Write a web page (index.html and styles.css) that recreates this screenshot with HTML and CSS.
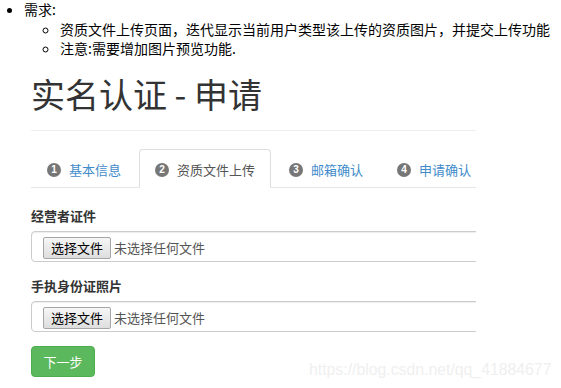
FILE: index.html
```html
<!DOCTYPE html>
<html lang="zh-CN">
<head>
<meta charset="utf-8">
<title>实名认证 - 申请</title>
<link rel="stylesheet" href="styles.css">
</head>
<body>
<ul class="req">
  <li>需求:
    <ul class="req-sub">
      <li>资质文件上传页面，迭代显示当前用户类型该上传的资质图片，并提交上传功能</li>
      <li>注意:需要增加图片预览功能.</li>
    </ul>
  </li>
</ul>
<div class="page">
  <div class="page-header">
    <h1>实名认证 - 申请</h1>
  </div>
  <ul class="tabs">
    <li><a class="tab"><span class="num">1</span>基本信息</a></li>
    <li><a class="tab active"><span class="num">2</span>资质文件上传</a></li>
    <li><a class="tab"><span class="num">3</span>邮箱确认</a></li>
    <li><a class="tab"><span class="num">4</span>申请确认</a></li>
  </ul>
  <form class="form">
    <div class="group">
      <label class="label">经营者证件</label>
      <div class="file-control"><span class="file-btn">选择文件</span><span class="file-name">未选择任何文件</span></div>
    </div>
    <div class="group">
      <label class="label">手执身份证照片</label>
      <div class="file-control"><span class="file-btn">选择文件</span><span class="file-name">未选择任何文件</span></div>
    </div>
    <span class="btn-next">下一步</span>
  </form>
</div>
<div class="watermark">https://blog.csdn.net/qq_41884677</div>
</body>
</html>
```

FILE: styles.css
```css
html, body {
  margin: 0;
  padding: 0;
  background: #fff;
}
body {
  font-family: "Noto Sans CJK SC", "Noto Sans", sans-serif;
  color: #000;
  position: relative;
  width: 561px;
  height: 388px;
  overflow: hidden;
}
.req {
  margin: 0;
  padding: 0 0 0 24px;
  font-size: 14px;
  line-height: 19.5px;
  list-style: disc;
}
.req-sub {
  margin: 0;
  padding: 0 0 0 36px;
  list-style: circle;
}
.page {
  margin-left: 31px;
  width: 445px;
  overflow: hidden;
  color: #333;
}
.page-header {
  margin-top: 16px;
  padding-bottom: 17px;
  border-bottom: 1px solid #eee;
}
.page-header h1 {
  margin: 0;
  font-size: 34px;
  line-height: 38px;
  font-weight: 400;
  color: #333;
}
.tabs {
  list-style: none;
  margin: 18px 0 18px 0;
  padding: 0;
  display: flex;
  border-bottom: 1px solid #e6e6e6;
  white-space: nowrap;
}
.tabs li {
  flex: none;
  margin-right: 2px;
  margin-bottom: -1px;
}
.tab {
  display: flex;
  align-items: center;
  padding: 10px 15px 7px 15px;
  line-height: 20px;
  font-size: 13px;
  color: #428bca;
  border: 1px solid transparent;
  border-radius: 4px 4px 0 0;
  white-space: nowrap;
}
.tab.active {
  color: #555;
  background: #fff;
  border-color: #ddd #ddd transparent;
}
.num {
  flex: none;
  display: inline-flex;
  align-items: center;
  justify-content: center;
  width: 14px;
  height: 14px;
  border-radius: 50%;
  background: #777;
  color: #fff;
  font-family: "Liberation Sans", sans-serif;
  font-weight: 700;
  font-size: 10px;
  line-height: 1;
  margin-right: 8px;
}
.form {
  margin: 0;
}
.group {
  margin-bottom: 14px;
}
.label {
  display: block;
  font-size: 13px;
  line-height: 20px;
  font-weight: 700;
  color: #333;
  margin-bottom: 5px;
}
.file-control {
  box-sizing: border-box;
  width: 480px;
  height: 31px;
  display: flex;
  align-items: center;
  padding: 5px 0 2px 11px;
  border: 1px solid #ccc;
  border-radius: 4px;
  box-shadow: inset 0 1px 1px rgba(0, 0, 0, .075);
  font-size: 13px;
  white-space: nowrap;
}
.file-btn {
  flex: none;
  box-sizing: border-box;
  height: 22px;
  width: 68px;
  display: inline-flex;
  align-items: center;
  justify-content: center;
  border: 1px solid #a6a6a6;
  border-radius: 2px;
  background: linear-gradient(#f6f6f6, #dedede);
  color: #000;
  font-size: 13px;
}
.file-name {
  margin-left: 3px;
  color: #555;
}
.btn-next {
  box-sizing: border-box;
  display: inline-flex;
  align-items: center;
  justify-content: center;
  width: 64px;
  height: 31px;
  background: #5cb85c;
  border: 1px solid #4cae4c;
  border-radius: 4px;
  color: #fff;
  font-size: 13px;
}
.watermark {
  position: absolute;
  left: 309px;
  top: 361px;
  font-family: "Liberation Sans", Arial, sans-serif;
  font-size: 15.8px;
  line-height: 18px;
  color: #efefef;
  white-space: nowrap;
}
```
